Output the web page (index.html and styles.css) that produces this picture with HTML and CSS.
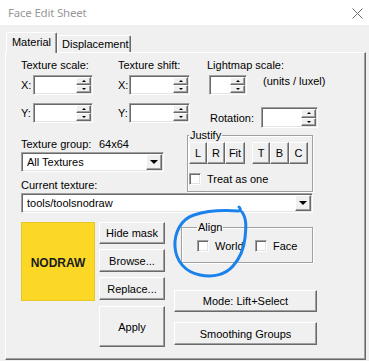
FILE: index.html
```html
<!DOCTYPE html>
<html lang="en">
<head>
  <meta charset="UTF-8">
  <meta name="viewport" content="width=device-width, initial-scale=1.0">
  <title>Face Edit Sheet</title>
  <link rel="stylesheet" href="styles.css">
</head>
<body>
  <div class="window">
    <!-- Barre de titre -->
    <div class="titlebar">
      <span class="title">Face Edit Sheet</span>
      <svg class="close" width="11" height="11" viewBox="0 0 11 11">
        <path d="M0.5 0.5 L10.5 10.5 M10.5 0.5 L0.5 10.5" stroke="#707070" stroke-width="1" fill="none"/>
      </svg>
    </div>

    <!-- Onglets -->
    <div class="tabs">
      <div class="tab active">Material</div>
      <div class="tab">Displacement</div>
    </div>

    <div class="panel">
      <!-- Echelle / decalage / lightmap -->
      <div class="row-top">
        <div class="col col-scale">
          <div class="label">Texture scale:</div>
          <div class="field-row">
            <span class="axis">X:</span>
            <div class="spin w60"><div class="spin-btns"><span class="sbtn up"></span><span class="sbtn down"></span></div></div>
          </div>
          <div class="field-row">
            <span class="axis">Y:</span>
            <div class="spin w60"><div class="spin-btns"><span class="sbtn up"></span><span class="sbtn down"></span></div></div>
          </div>
        </div>
        <div class="col col-shift">
          <div class="label">Texture shift:</div>
          <div class="field-row">
            <span class="axis">X:</span>
            <div class="spin w61"><div class="spin-btns"><span class="sbtn up"></span><span class="sbtn down"></span></div></div>
          </div>
          <div class="field-row">
            <span class="axis">Y:</span>
            <div class="spin w61"><div class="spin-btns"><span class="sbtn up"></span><span class="sbtn down"></span></div></div>
          </div>
        </div>
        <div class="col col-light">
          <div class="label">Lightmap scale:</div>
          <div class="light-row">
            <div class="spin w38"><div class="spin-btns"><span class="sbtn up"></span><span class="sbtn down"></span></div></div>
            <span class="units">(units / luxel)</span>
          </div>
          <div class="rot-row">
            <span class="rot-label">Rotation:</span>
            <div class="spin w57 tall"><div class="spin-btns"><span class="sbtn up"></span><span class="sbtn down"></span></div></div>
          </div>
        </div>
      </div>

      <!-- Groupe de textures / justification -->
      <div class="row-mid">
        <div class="col-group">
          <div class="label group-label"><span class="gname">Texture group:</span>64x64</div>
          <div class="combo w143">
            <span class="combo-text">All Textures</span>
            <span class="combo-btn"><span class="tri"></span></span>
          </div>
          <div class="label cur-label">Current texture:</div>
        </div>
        <fieldset class="box justify">
          <legend>Justify</legend>
          <div class="jbtns">
            <button class="btn jb w18">L</button><button class="btn jb w18">R</button><button class="btn jb w20">Fit</button>
            <span class="jgap"></span>
            <button class="btn jb w18">T</button><button class="btn jb w19">B</button><button class="btn jb w19">C</button>
          </div>
          <div class="check-row">
            <span class="check"></span><span class="check-text">Treat as one</span>
          </div>
        </fieldset>
      </div>

      <div class="combo w292">
        <span class="combo-text">tools/toolsnodraw</span>
        <span class="combo-btn"><span class="tri"></span></span>
      </div>

      <!-- Apercu, boutons, alignement -->
      <div class="row-bottom">
        <div class="preview"><span>NODRAW</span></div>
        <div class="btn-col">
          <button class="btn b-hide">Hide mask</button>
          <button class="btn b-browse">Browse...</button>
          <button class="btn b-replace">Replace...</button>
          <button class="btn b-apply">Apply</button>
        </div>
        <div class="right-col">
          <fieldset class="box align">
            <legend>Align</legend>
            <div class="check-row">
              <span class="check"></span><span class="check-text world">World</span>
              <span class="check"></span><span class="check-text">Face</span>
            </div>
          </fieldset>
          <button class="btn b-mode">Mode: Lift+Select</button>
          <button class="btn b-smooth">Smoothing Groups</button>
        </div>
      </div>
    </div>

    <!-- Trait bleu dessine a la main par-dessus -->
    <svg class="scribble" width="369" height="361" viewBox="0 0 369 361">
      <path d="M239 207 C241 209 241 211 238 211 C222 210 206 211 194 215 C181 219 174 233 175 247 C176 261 185 272 200 275 C214 278 226 274 233 266 C241 257 244 247 245 238 C246 228 247 219 242 212"
            stroke="#1a82ea" stroke-width="3" fill="none" stroke-linecap="round" stroke-linejoin="round"/>
    </svg>
  </div>
</body>
</html>
```

FILE: styles.css
```css
/* Boite de dialogue style Windows classique */
body {
  margin: 0;
  background-color: #f0f0f0;
  font-family: "Liberation Sans", Arial, sans-serif;
  font-size: 11px;
  color: #000;
}
.window {
  width: 369px;
  height: 361px;
  position: relative;
  overflow: hidden;
}
.titlebar {
  height: 25px;
  background-color: #fff;
  display: flex;
  align-items: center;
  justify-content: space-between;
  padding: 0 6px 0 8px;
  box-sizing: border-box;
}
.title {
  font-family: "Noto Sans", sans-serif;
  font-size: 11.5px;
  color: #999;
  letter-spacing: -0.2px;
}
.close {
  display: block;
  margin-top: 1px;
}

/* Onglets */
.tabs {
  display: flex;
  align-items: flex-end;
  height: 20px;
  padding: 7px 0 0 6px;
}
.tab {
  box-sizing: border-box;
  height: 17px;
  line-height: 16px;
  padding: 0 4px;
  border: 1px solid #fff;
  border-right-color: #696969;
  border-bottom: 0;
  border-radius: 2px 2px 0 0;
  box-shadow: inset -1px 0 #a0a0a0;
  text-align: center;
  width: 74px;
}
.tab.active {
  width: 51px;
  height: 21px;
  line-height: 18px;
  margin-bottom: -1px;
  position: relative;
  z-index: 1;
  background-color: #f0f0f0;
}

/* Panneau */
.panel {
  box-sizing: border-box;
  margin-left: 5px;
  width: 361px;
  height: 308px;
  border: 1px solid #fff;
  border-right-color: #696969;
  border-bottom-color: #696969;
  box-shadow: inset -1px -1px #a0a0a0;
  padding: 6px 0 0 15px;
}
.label {
  height: 13px;
  line-height: 13px;
  white-space: nowrap;
}
.row-top {
  display: flex;
}
.col-scale { width: 97px; }
.col-shift { width: 89px; }
.col-light { flex: 1; }
.field-row {
  display: flex;
  align-items: center;
  height: 20px;
  margin-top: 3px;
}
.field-row + .field-row { margin-top: 8px; }
.axis { width: 12px; }
.col-shift .axis { width: 11px; }

/* Champs numeriques avec fleches */
.spin {
  box-sizing: border-box;
  height: 20px;
  background-color: #fff;
  border: 1px solid #a0a0a0;
  border-right-color: #fff;
  border-bottom-color: #fff;
  box-shadow: inset 1px 1px #696969, inset -1px -1px #e3e3e3;
  display: flex;
  justify-content: flex-end;
  padding: 1px 1px 1px 0;
}
.spin.tall { height: 21px; }
.w60 { width: 60px; }
.w61 { width: 61px; }
.w38 { width: 38px; }
.w57 { width: 57px; }
.spin-btns {
  width: 15px;
  display: flex;
  flex-direction: column;
}
.sbtn {
  flex: 1;
  box-sizing: border-box;
  background-color: #f0f0f0;
  border: 1px solid #fff;
  border-right-color: #696969;
  border-bottom-color: #696969;
  box-shadow: inset -1px -1px #a0a0a0;
  display: flex;
  align-items: center;
  justify-content: center;
}
.sbtn::after {
  content: "";
  border-left: 2px solid transparent;
  border-right: 2px solid transparent;
}
.sbtn.up::after { border-bottom: 2px solid #000; }
.sbtn.down::after { border-top: 2px solid #000; }

.light-row {
  display: flex;
  align-items: flex-start;
  margin-top: 3px;
}
.light-row .spin { margin-left: 2px; }
.units {
  margin-left: 16px;
  line-height: 13px;
}
.rot-row {
  display: flex;
  align-items: center;
  margin-top: 12px;
}
.rot-label {
  width: 51px;
  margin-left: 3px;
}

/* Ligne du milieu */
.row-mid {
  display: flex;
}
.col-group { width: 166px; }
.group-label { margin-top: 10px; }
.gname {
  display: inline-block;
  width: 78px;
}
.cur-label { margin-top: 7px; }
.combo {
  box-sizing: border-box;
  height: 20px;
  margin-top: 1px;
  background-color: #fff;
  border: 1px solid #a0a0a0;
  border-right-color: #fff;
  border-bottom-color: #fff;
  box-shadow: inset 1px 1px #696969, inset -1px -1px #e3e3e3;
  display: flex;
  align-items: center;
  justify-content: space-between;
  padding: 1px 1px 1px 5px;
}
.w143 { width: 143px; }
.w292 { width: 292px; }
.combo-btn {
  box-sizing: border-box;
  width: 16px;
  height: 16px;
  background-color: #f0f0f0;
  border: 1px solid #fff;
  border-right-color: #696969;
  border-bottom-color: #696969;
  box-shadow: inset -1px -1px #a0a0a0;
  display: flex;
  align-items: center;
  justify-content: center;
}
.tri {
  border-left: 4px solid transparent;
  border-right: 4px solid transparent;
  border-top: 4px solid #000;
}

/* Cadres de groupe */
.box {
  margin: 0;
  padding: 0 0 0 1px;
  min-width: 0;
  border: 1px solid #a0a0a0;
  box-shadow: 1px 1px 0 #fff, inset 1px 1px 0 #fff;
}
.box legend {
  padding: 0 1px;
  line-height: 13px;
}
.justify {
  width: 126px;
  margin-top: 1px;
  padding-bottom: 5px;
  box-sizing: border-box;
}
.jbtns {
  display: flex;
  height: 22px;
}
.jgap { width: 7px; }
.w18 { width: 18px; }
.w19 { width: 19px; }
.w20 { width: 20px; }
.check-row {
  display: flex;
  align-items: center;
  margin-top: 9px;
  height: 12px;
}
.check {
  box-sizing: border-box;
  width: 12px;
  height: 12px;
  background-color: #fff;
  border: 1px solid #a0a0a0;
  border-right-color: #fff;
  border-bottom-color: #fff;
  box-shadow: inset 1px 1px #696969, inset -1px -1px #e3e3e3;
}
.check-text {
  margin-left: 6px;
}
.check-text.world { width: 40px; }

/* Boutons */
.btn {
  box-sizing: border-box;
  margin: 0;
  padding: 0;
  font-family: "Liberation Sans", Arial, sans-serif;
  font-size: 11px;
  color: #000;
  background-color: #f0f0f0;
  border: 1px solid #fff;
  border-right-color: #696969;
  border-bottom-color: #696969;
  box-shadow: inset -1px -1px #a0a0a0;
}
.jb {
  height: 22px;
}

/* Bas du panneau */
.row-bottom {
  display: flex;
  margin-top: 9px;
}
.preview {
  width: 74px;
  height: 79px;
  background-color: #fbd826;
  box-shadow: inset 0 0 0 1px #e8c62a;
  display: flex;
  align-items: center;
  justify-content: center;
}
.preview span {
  font-weight: bold;
  font-size: 12px;
  color: #1c1c1c;
  margin-top: 3px;
}
.btn-col {
  margin-left: 4px;
  width: 66px;
  display: flex;
  flex-direction: column;
}
.btn-col .btn { width: 66px; }
.b-hide { height: 22px; }
.b-browse { height: 23px; margin-top: 5px; }
.b-replace { height: 23px; margin-top: 5px; }
.b-apply { height: 41px; margin-top: 6px; }
.right-col {
  margin-left: 9px;
  width: 143px;
  display: flex;
  flex-direction: column;
}
.align {
  width: 132px;
  margin: -1px 0 0 7px;
  padding: 0 0 10px 15px;
  box-sizing: border-box;
}
.align .check-row { margin-top: 6px; }
.b-mode { height: 22px; margin-top: 27px; }
.b-smooth { height: 23px; margin-top: 10px; }

/* Trait bleu */
.scribble {
  position: absolute;
  left: 0;
  top: 0;
  pointer-events: none;
}
```
